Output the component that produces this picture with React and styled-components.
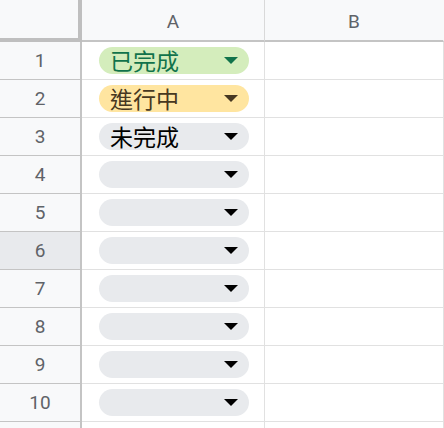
import React from 'react'
import styled, { createGlobalStyle } from 'styled-components'

const GlobalStyle = createGlobalStyle`
  html, body {
    margin: 0;
    padding: 0;
    background: #fff;
  }
  body {
    font-family: Roboto, "Liberation Sans", "Noto Sans CJK TC", sans-serif;
    overflow: hidden;
  }
`

const chipColors = {
  done: { bg: '#d4edbc', fg: '#11734b' },
  doing: { bg: '#ffe5a0', fg: '#473821' },
  todo: { bg: '#e8eaed', fg: '#000000' },
}

const rows = [
  { label: '已完成', kind: 'done' },
  { label: '進行中', kind: 'doing' },
  { label: '未完成', kind: 'todo' },
  { label: '', kind: 'todo' },
  { label: '', kind: 'todo' },
  { label: '', kind: 'todo' },
  { label: '', kind: 'todo' },
  { label: '', kind: 'todo' },
  { label: '', kind: 'todo' },
  { label: '', kind: 'todo' },
  { label: '', kind: 'todo', partial: true },
]

const Sheet = styled.div`
  display: grid;
  grid-template-columns: 82px 183px 1fr;
  grid-auto-rows: 38px;
  grid-template-rows: 42px;
  width: 444px;
  height: 428px;
  overflow: hidden;
`

const Corner = styled.div`
  background: #f8f9fa;
  border-right: 4px solid #bfbfbf;
  border-bottom: 4px solid #bfbfbf;
`

const ColHeader = styled.div`
  display: flex;
  align-items: center;
  justify-content: center;
  background: #f8f9fa;
  border-bottom: 2px solid #c4c4c4;
  border-right: 1px solid ${(p) => (p.$last ? 'transparent' : '#d9d9d9')};
  color: #5f6368;
  font-size: 19px;
  padding-top: 2px;
`

const RowHeader = styled.div`
  display: flex;
  align-items: center;
  justify-content: center;
  background: ${(p) => (p.$active ? '#e8eaed' : '#f8f9fa')};
  border-right: 2px solid #c4c4c4;
  border-bottom: 1px solid #c4c4c4;
  color: #5f6368;
  font-size: 19px;
`

const Cell = styled.div`
  display: flex;
  align-items: center;
  background: #fff;
  border-right: 1px solid #e1e1e1;
  border-bottom: 1px solid #e1e1e1;
  padding-left: ${(p) => (p.$chip ? '17px' : '0')};
`

const Chip = styled.div`
  display: flex;
  align-items: center;
  justify-content: space-between;
  width: 150px;
  height: 27px;
  box-sizing: border-box;
  padding: 0 11px 0 11px;
  border-radius: 14px;
  background: ${(p) => chipColors[p.$kind].bg};
  color: ${(p) => chipColors[p.$kind].fg};
  font-family: "Noto Sans CJK TC", "Noto Sans CJK SC", sans-serif;
  font-size: 23px;
  line-height: 27px;
`

const Label = styled.span`
  display: block;
  height: 27px;
  margin-top: -1px;
`

const Arrow = styled.svg`
  width: 14px;
  height: 7px;
  flex-shrink: 0;
  fill: currentColor;
`

const App = () => (
  <>
    <GlobalStyle />
    <Sheet>
      <Corner />
      <ColHeader>A</ColHeader>
      <ColHeader $last>B</ColHeader>
      {rows.map((row, i) => (
        <React.Fragment key={i}>
          <RowHeader $active={i === 5}>{row.partial ? '' : i + 1}</RowHeader>
          <Cell $chip>
            {!row.partial && (
              <Chip $kind={row.kind}>
                <Label>{row.label}</Label>
                <Arrow viewBox="0 0 14 7">
                  <path d="M0 0 L14 0 L7 7 Z" />
                </Arrow>
              </Chip>
            )}
          </Cell>
          <Cell />
        </React.Fragment>
      ))}
    </Sheet>
  </>
)

export default App
